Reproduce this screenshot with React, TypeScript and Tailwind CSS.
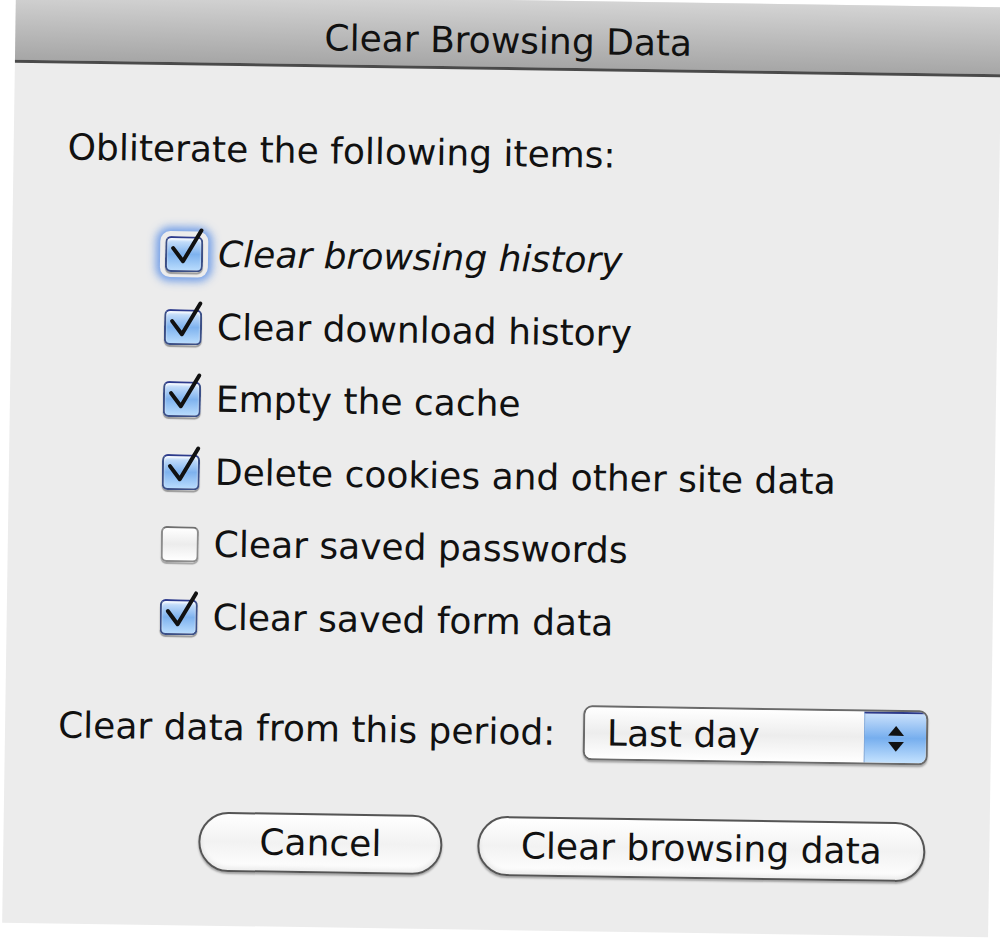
import type { ReactNode } from "react";

type Item = { label: string; checked: boolean; focused?: boolean; italic?: boolean };

const items: Item[] = [
  { label: "Clear browsing history", checked: true, focused: true, italic: true },
  { label: "Clear download history", checked: true },
  { label: "Empty the cache", checked: true },
  { label: "Delete cookies and other site data", checked: true },
  { label: "Clear saved passwords", checked: false },
  { label: "Clear saved form data", checked: true },
];

function Checkbox({ checked, focused }: { checked: boolean; focused?: boolean }) {
  return (
    <div className="relative h-[36px] w-[38px] shrink-0">
      <div
        className={
          checked
            ? "h-full w-full rounded-[6px] border-2 border-[#3b4f86] border-t-[#2c3a8c] bg-gradient-to-b from-[#d6e8fc] via-[#7eb2ee] to-[#b9dcfd] shadow-[inset_0_2px_2px_rgba(255,255,255,0.8),0_2px_1px_rgba(0,0,0,0.35)]"
            : "h-full w-full rounded-[6px] border-2 border-[#8c8c8c] border-t-[#6e6e6e] bg-gradient-to-b from-[#ffffff] via-[#ececec] to-[#ffffff] shadow-[0_2px_1px_rgba(0,0,0,0.3)]"
        }
      />
      {focused && (
        <div className="pointer-events-none absolute -inset-[5px] rounded-[10px] shadow-[0_0_8px_4px_rgba(70,130,230,0.75)]" />
      )}
      {checked && (
        <svg className="absolute -top-[10px] left-[5px] h-[42px] w-[40px]" viewBox="0 0 40 42" fill="none">
          <path d="M3 22 L13 35 L31 4" stroke="#111" strokeWidth="4" strokeLinecap="round" strokeLinejoin="round" />
        </svg>
      )}
    </div>
  );
}

function PillButton({ children, width }: { children: ReactNode; width: string }) {
  return (
    <button
      type="button"
      className={`flex h-[60px] items-center justify-center rounded-full border-2 border-[#555] bg-gradient-to-b from-[#ffffff] via-[#f2f2f2] to-[#ffffff] text-[36px] leading-none text-[#111] shadow-[inset_0_-3px_4px_rgba(0,0,0,0.08),0_2px_2px_rgba(0,0,0,0.3)] ${width}`}
    >
      {children}
    </button>
  );
}

export default function App() {
  return (
    <div className="relative h-[945px] w-[1000px] overflow-hidden bg-white font-['DejaVu_Sans',sans-serif] text-[#111]">
      <div className="absolute left-[9px] top-0 flex h-[930px] w-[986px] rotate-[0.85deg] flex-col bg-[#ececec]">
        <div className="flex h-[70px] shrink-0 items-end justify-center border-b-[3px] border-[#4a4a4a] bg-gradient-to-b from-[#d4d4d4] to-[#a6a6a6] pb-[8px]">
          <span className="text-[36px] leading-none">Clear Browsing Data</span>
        </div>

        <div className="pl-[54px] pt-[62px] text-[36px] leading-[44px]">Obliterate the following items:</div>

        <div className="mt-[47px] flex flex-col pl-[153px]">
          {items.map((item) => (
            <div key={item.label} className="flex h-[72.5px] items-center gap-[15px]">
              <Checkbox checked={item.checked} focused={item.focused} />
              <span className={`text-[36px] leading-none ${item.italic ? "italic" : ""}`}>{item.label}</span>
            </div>
          ))}
        </div>

        <div className="mt-[46px] flex h-[55px] items-center pl-[53px]">
          <span className="w-[525px] text-[36px] leading-none">Clear data from this period:</span>
          <div className="flex h-[55px] w-[345px] overflow-hidden rounded-[9px] border-2 border-[#6a6a6a] shadow-[0_2px_2px_rgba(0,0,0,0.3)]">
            <div className="flex flex-1 items-center bg-gradient-to-b from-[#ffffff] via-[#ededed] to-[#ffffff] pl-[22px] text-[36px] leading-none">
              Last day
            </div>
            <div className="flex w-[62px] flex-col items-center justify-center gap-[6px] border-l border-[#7aa6dc] border-t-2 border-t-[#2c3a8c] bg-gradient-to-b from-[#c9e0fb] via-[#76aeee] to-[#c4e2fe]">
              <svg width="16" height="10" viewBox="0 0 16 10">
                <path d="M8 0 L16 10 L0 10 Z" fill="#111" />
              </svg>
              <svg width="16" height="10" viewBox="0 0 16 10">
                <path d="M0 0 L16 0 L8 10 Z" fill="#111" />
              </svg>
            </div>
          </div>
        </div>

        <div className="mt-[57px] flex justify-end gap-[35px] pr-[64px]">
          <PillButton width="w-[244px]">Cancel</PillButton>
          <PillButton width="w-[448px]">Clear browsing data</PillButton>
        </div>
      </div>
    </div>
  );
}
